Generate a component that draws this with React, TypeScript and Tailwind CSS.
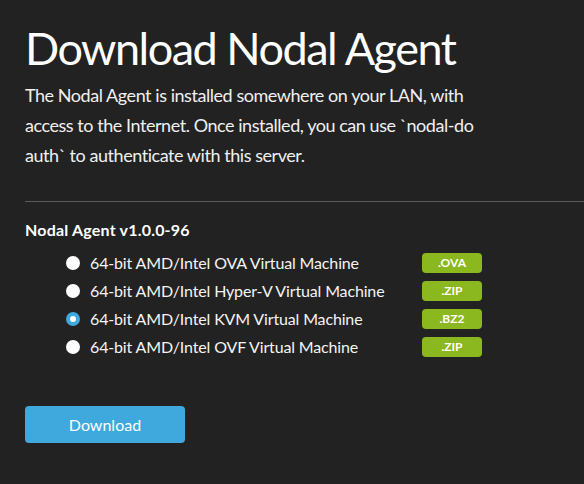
import React, { useState } from "react";

const options = [
    { label: "64-bit AMD/Intel OVA Virtual Machine", ext: ".OVA" },
    { label: "64-bit AMD/Intel Hyper-V Virtual Machine", ext: ".ZIP" },
    { label: "64-bit AMD/Intel KVM Virtual Machine", ext: ".BZ2" },
    { label: "64-bit AMD/Intel OVF Virtual Machine", ext: ".ZIP" },
];

export default function App() {
    const [selected, setSelected] = useState(2);

    return (
        <div className="min-h-screen w-full overflow-hidden bg-[#222222] text-white font-['Lato',sans-serif]">
            <div className="pl-[25px] pt-[20px]">
                <h1 className="text-[45px] leading-[56px] font-normal tracking-[-1.5px]">Download Nodal Agent</h1>
                <p className="mt-[4px] w-[480px] text-[18px] leading-[30px] tracking-[-0.45px] text-[#f0f0f0]">
                    The Nodal Agent is installed somewhere on your LAN, with access to the Internet. Once installed, you can use `nodal-do auth` to authenticate with this server.
                </p>
                <hr className="mt-[31px] border-t border-[#5a5a5a]" />

                <h2 className="mt-[17px] text-[16px] font-bold leading-[22px] tracking-[0.2px]">Nodal Agent v1.0.0-96</h2>

                <div className="mt-[8px] flex flex-col">
                    {options.map((opt, i) => (
                        <label
                            key={i}
                            onClick={() => setSelected(i)}
                            className="flex h-[28px] items-center pl-[41px] cursor-pointer">
                            {selected === i ? (
                                <span className="flex h-[14px] w-[14px] items-center justify-center rounded-full bg-[#3fa8dc]">
                                    <span className="h-[6px] w-[6px] rounded-full bg-white" />
                                </span>
                            ) : (
                                <span className="h-[14px] w-[14px] rounded-full bg-white" />
                            )}
                            <span className="ml-[10px] w-[332px] text-[16px] tracking-[-0.15px] text-[#f4f4f4]">{opt.label}</span>
                            <span className="flex h-[20px] w-[60px] items-center justify-center rounded-[4px] bg-[#8cb81f] text-[12px] font-bold text-white">
                                {opt.ext}
                            </span>
                        </label>
                    ))}
                </div>

                <button className="mt-[45px] h-[37px] w-[160px] rounded-[4px] bg-[#3fa8dc] text-[16px] text-white">
                    Download
                </button>
            </div>
        </div>
    );
}
